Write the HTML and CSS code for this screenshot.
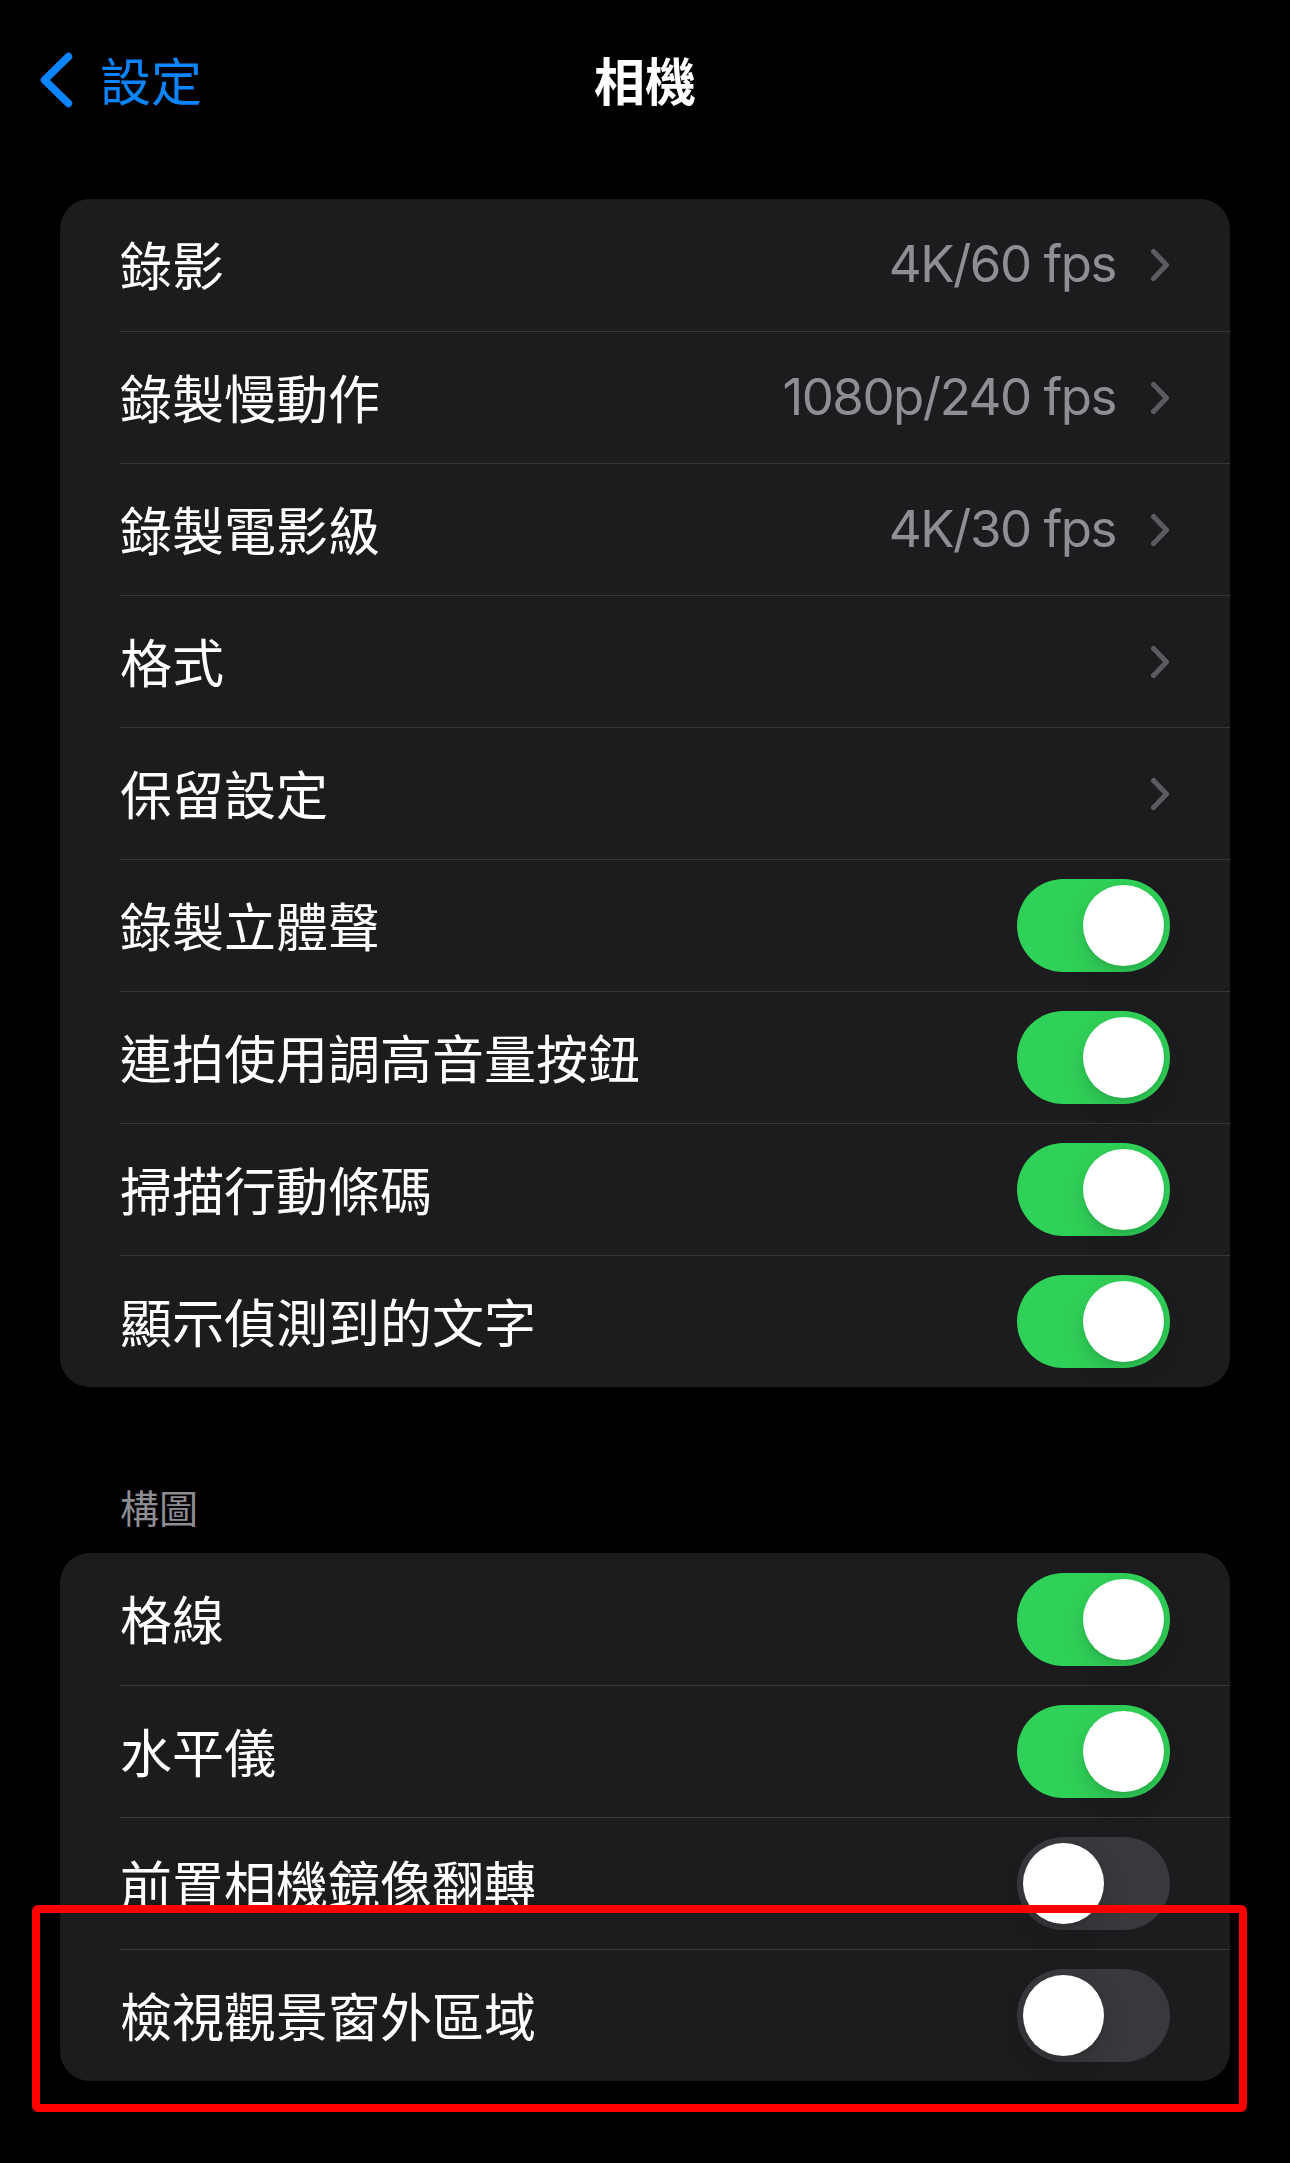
FILE: index.html
```html
<!DOCTYPE html>
<html lang="zh-Hant">
<head>
<meta charset="utf-8">
<title>相機</title>
<link rel="stylesheet" href="styles.css">
</head>
<body>
<div class="screen">
  <header class="nav">
    <div class="back">
      <svg class="back-chevron" width="40" height="60" viewBox="0 0 40 60"><path d="M32.5 6.5 L8.5 30 L32.5 53.5" fill="none" stroke="#0a84ff" stroke-width="7.5" stroke-linecap="round" stroke-linejoin="round"/></svg>
      <span class="back-label">設定</span>
    </div>
    <div class="title">相機</div>
    <div></div>
  </header>

  <section class="group first">
    <div class="row"><div class="row-inner"><span class="label">錄影</span><span class="value">4K/60 fps</span><svg class="chev" width="20" height="34" viewBox="0 0 20 34"><path d="M3.5 3.5 L16.5 17 L3.5 30.5" fill="none" stroke="currentColor" stroke-width="5" stroke-linecap="round" stroke-linejoin="round"/></svg></div></div>
    <div class="row"><div class="row-inner"><span class="label">錄製慢動作</span><span class="value">1080p/240 fps</span><svg class="chev" width="20" height="34" viewBox="0 0 20 34"><path d="M3.5 3.5 L16.5 17 L3.5 30.5" fill="none" stroke="currentColor" stroke-width="5" stroke-linecap="round" stroke-linejoin="round"/></svg></div></div>
    <div class="row"><div class="row-inner"><span class="label">錄製電影級</span><span class="value">4K/30 fps</span><svg class="chev" width="20" height="34" viewBox="0 0 20 34"><path d="M3.5 3.5 L16.5 17 L3.5 30.5" fill="none" stroke="currentColor" stroke-width="5" stroke-linecap="round" stroke-linejoin="round"/></svg></div></div>
    <div class="row"><div class="row-inner"><span class="label">格式</span><span class="value"></span><svg class="chev" width="20" height="34" viewBox="0 0 20 34"><path d="M3.5 3.5 L16.5 17 L3.5 30.5" fill="none" stroke="currentColor" stroke-width="5" stroke-linecap="round" stroke-linejoin="round"/></svg></div></div>
    <div class="row"><div class="row-inner"><span class="label">保留設定</span><span class="value"></span><svg class="chev" width="20" height="34" viewBox="0 0 20 34"><path d="M3.5 3.5 L16.5 17 L3.5 30.5" fill="none" stroke="currentColor" stroke-width="5" stroke-linecap="round" stroke-linejoin="round"/></svg></div></div>
    <div class="row"><div class="row-inner"><span class="label">錄製立體聲</span><span class="toggle on"><span class="knob"></span></span></div></div>
    <div class="row"><div class="row-inner"><span class="label">連拍使用調高音量按鈕</span><span class="toggle on"><span class="knob"></span></span></div></div>
    <div class="row"><div class="row-inner"><span class="label">掃描行動條碼</span><span class="toggle on"><span class="knob"></span></span></div></div>
    <div class="row"><div class="row-inner"><span class="label">顯示偵測到的文字</span><span class="toggle on"><span class="knob"></span></span></div></div>
  </section>

  <div class="section-header">構圖</div>

  <section class="group">
    <div class="row"><div class="row-inner"><span class="label">格線</span><span class="toggle on"><span class="knob"></span></span></div></div>
    <div class="row"><div class="row-inner"><span class="label">水平儀</span><span class="toggle on"><span class="knob"></span></span></div></div>
    <div class="row"><div class="row-inner"><span class="label">前置相機鏡像翻轉</span><span class="toggle"><span class="knob"></span></span></div></div>
    <div class="row"><div class="row-inner"><span class="label">檢視觀景窗外區域</span><span class="toggle"><span class="knob"></span></span></div></div>
  </section>

  <div class="highlight"></div>
</div>
</body>
</html>
```
FILE: styles.css
```css
html, body {
  margin: 0;
  padding: 0;
  background: #000;
}
body {
  font-family: "Inter", "Noto Sans CJK TC", sans-serif;
  color: #fff;
  -webkit-font-smoothing: antialiased;
}
.screen {
  position: relative;
  width: 1290px;
  height: 2163px;
  overflow: hidden;
}
.nav {
  height: 157px;
  display: grid;
  grid-template-columns: 1fr auto 1fr;
  align-items: center;
}
.back {
  display: flex;
  align-items: center;
  padding-left: 36px;
}
.back-chevron {
  display: block;
  margin-top: 2px;
}
.back-label {
  margin-left: 24px;
  font-family: "Noto Sans CJK TC", sans-serif;
  font-size: 51px;
  line-height: 60px;
  color: #0a84ff;
}
.title {
  font-family: "Noto Sans CJK TC", sans-serif;
  font-size: 51px;
  font-weight: 600;
  line-height: 60px;
  color: #fff;
}
.group {
  margin: 0 60px;
  background: #1c1c1e;
  border-radius: 30px;
  overflow: hidden;
}
.group.first {
  margin-top: 42px;
}
.row {
  height: 132px;
  padding-left: 60px;
}
.row-inner {
  height: 100%;
  box-sizing: border-box;
  display: flex;
  align-items: center;
  padding-right: 60px;
}
.row + .row .row-inner {
  border-top: 1px solid #38383a;
}
.label {
  flex: 1;
  font-family: "Noto Sans CJK TC", sans-serif;
  font-size: 52px;
  line-height: 60px;
  margin-bottom: 2px;
  color: #fff;
}
.value {
  font-family: "Inter", sans-serif;
  font-size: 51px;
  line-height: 60px;
  color: #8e8e93;
  letter-spacing: -1.5px;
  margin-bottom: 2px;
}
.chev {
  display: block;
  margin-left: 34px;
  color: #5b5b60;
}
.toggle {
  width: 153px;
  height: 93px;
  box-sizing: border-box;
  border-radius: 47px;
  background: #39393d;
  padding: 6px;
  display: flex;
  justify-content: flex-start;
}
.toggle.on {
  background: #30d158;
  justify-content: flex-end;
}
.knob {
  width: 81px;
  height: 81px;
  border-radius: 50%;
  background: #fff;
  box-shadow: 0 9px 24px rgba(0, 0, 0, 0.15), 0 3px 3px rgba(0, 0, 0, 0.06);
}
.section-header {
  padding: 97px 120px 0;
  font-family: "Noto Sans CJK TC", sans-serif;
  font-size: 39px;
  line-height: 44px;
  color: #8d8d93;
  margin-bottom: 25px;
}
.highlight {
  position: absolute;
  left: 32px;
  top: 1905px;
  width: 1215px;
  height: 207px;
  box-sizing: border-box;
  border: 8px solid #ff0000;
  border-radius: 6px;
}
```
